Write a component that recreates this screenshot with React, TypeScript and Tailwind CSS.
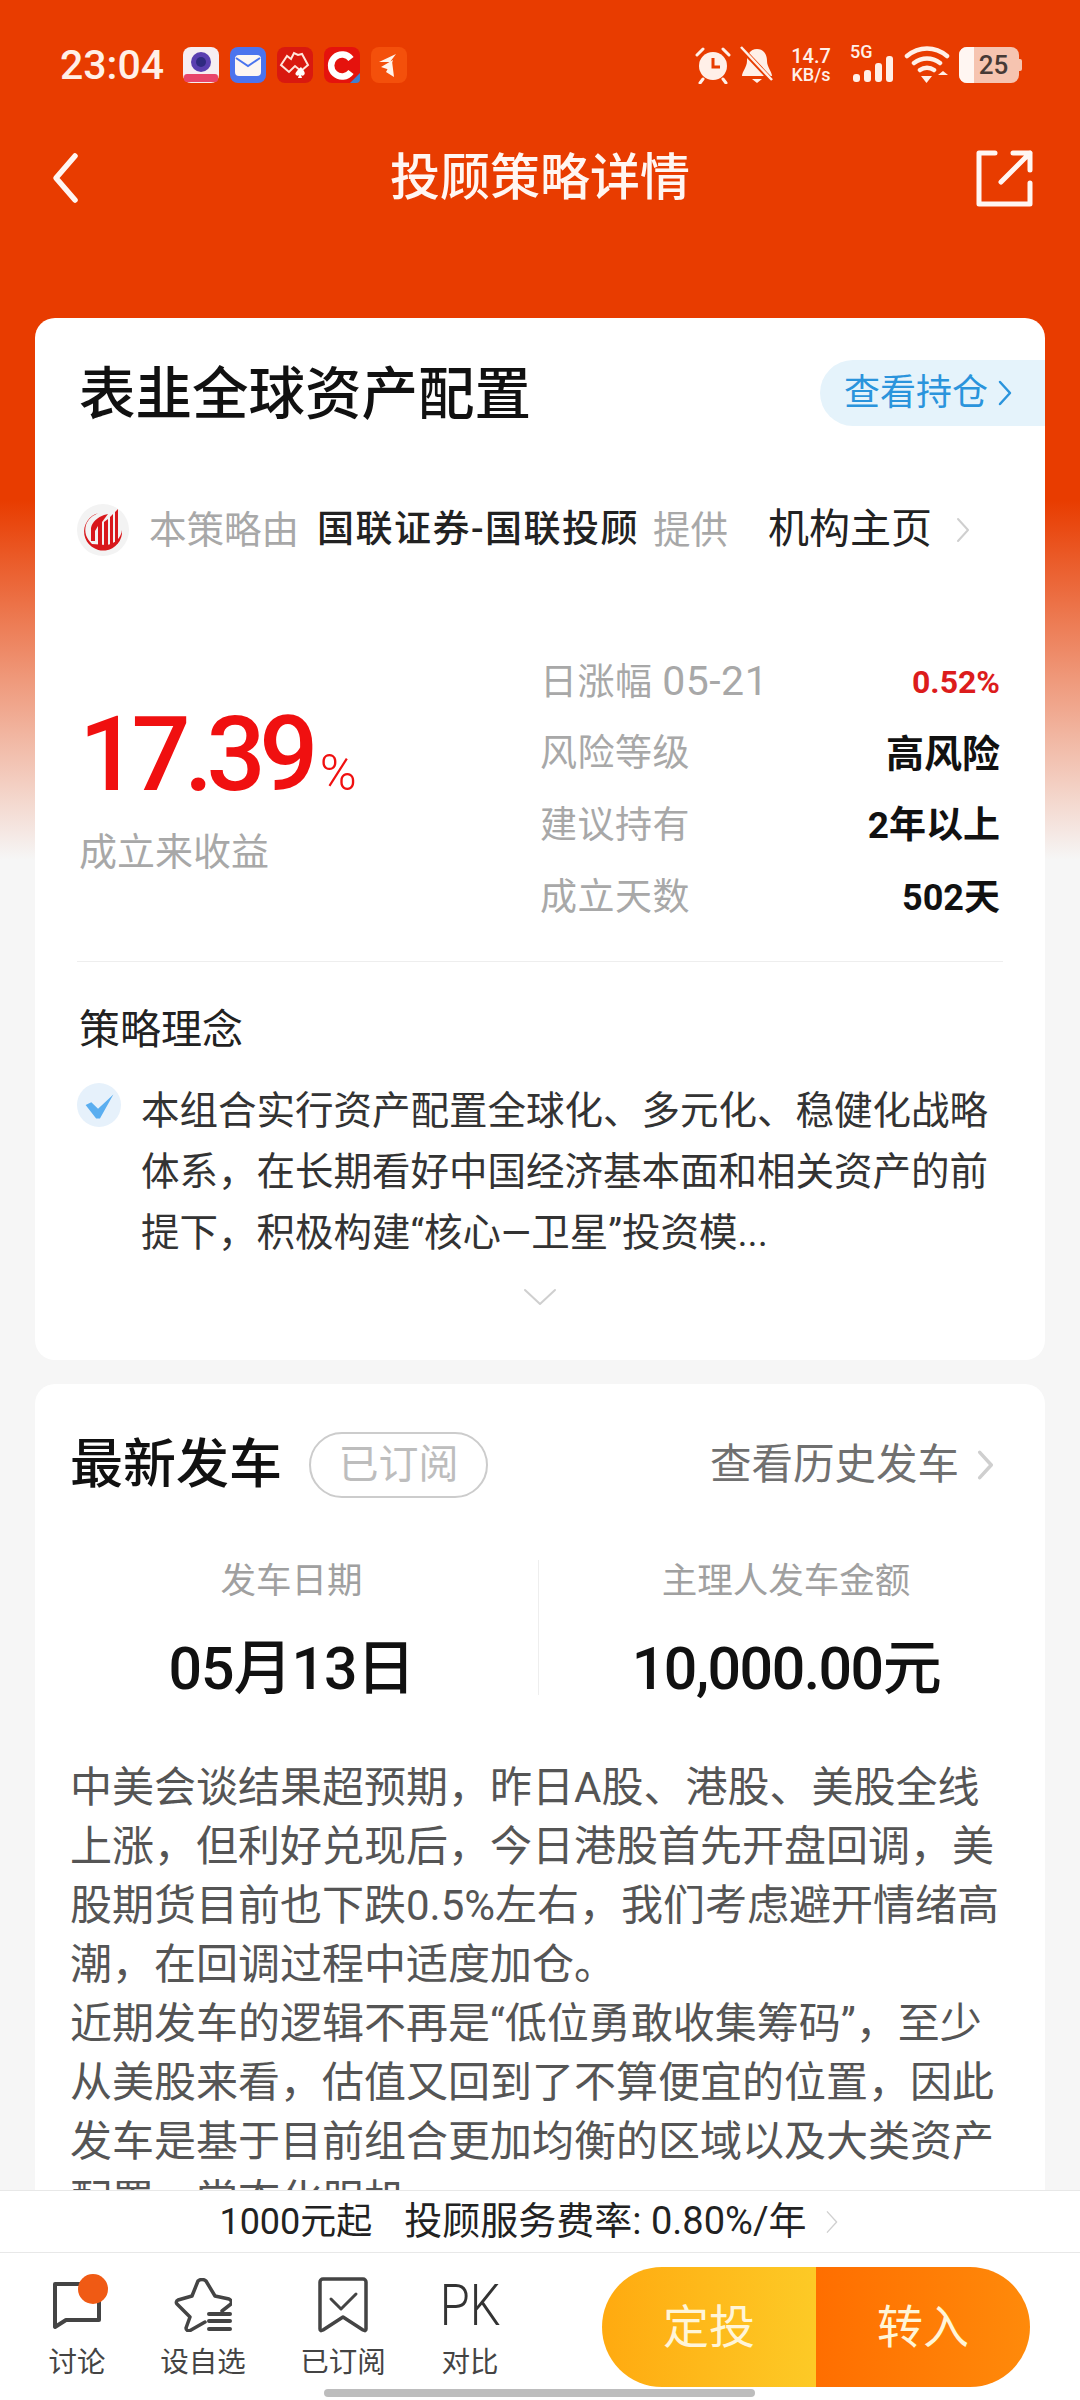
import React from "react";

const Chevron = ({ className = "", color = "#c8c8c8", w = 2.5 }: { className?: string; color?: string; w?: number }) => (
  <svg viewBox="0 0 14 26" className={className} fill="none" stroke={color} strokeWidth={w} strokeLinecap="round" strokeLinejoin="round">
    <path d="M2 2l10 11L2 24" />
  </svg>
);

const Row = ({ label, value, valueClass }: { label: React.ReactNode; value: string; valueClass: string }) => (
  <div className="flex h-[72px] items-center justify-between">
    <span className="text-[37px] tracking-[0.5px] text-[#a8a8a8]">{label}</span>
    <span className={valueClass}>{value}</span>
  </div>
);

const ToolItem = ({ icon, label, className }: { icon: React.ReactNode; label: string; className: string }) => (
  <div className={`flex w-[90px] flex-col items-center ${className}`}>
    <div className="flex h-[70px] items-center justify-center">{icon}</div>
    <span className="mt-[5px] whitespace-nowrap text-[28.5px] leading-[36px] text-[#444]">{label}</span>
  </div>
);

export default function App() {
  return (
    <div
      className="relative flex h-[2400px] w-[1080px] flex-col overflow-hidden bg-[#f6f6f6] text-black"
      style={{ fontFamily: 'Roboto, "Noto Sans CJK SC", sans-serif' }}
    >
      <div className="flex min-h-0 flex-1 flex-col overflow-hidden bg-[linear-gradient(180deg,#e83c00_0px,#e83c00_500px,#f6f6f6_860px,#f6f6f6_100%)]">
        {/* status bar */}
        <div className="flex h-[84px] shrink-0 items-center justify-between pl-[60px] pr-[58px] pt-[46px] text-[#fff0e8]">
          <div className="flex items-center">
            <span className="text-[41px] font-medium leading-[42px]">23:04</span>
            <div className="ml-[19px] flex items-center gap-[11px]">
              <svg viewBox="0 0 36 36" className="h-[36px] w-[36px]">
                <rect width="36" height="36" rx="8" fill="#f6eef2" />
                <circle cx="18" cy="15" r="10" fill="#5a3fb0" />
                <circle cx="18" cy="15" r="5" fill="#2f2a80" />
                <rect x="1" y="27" width="34" height="8" rx="3" fill="#e8456a" />
              </svg>
              <svg viewBox="0 0 36 36" className="h-[36px] w-[36px]">
                <rect width="36" height="36" rx="8" fill="#4b74ee" />
                <rect x="5" y="8" width="26" height="21" rx="4" fill="#fdf6f2" />
                <path d="M6 11l12 8 12-8" fill="none" stroke="#4b74ee" strokeWidth="2" />
              </svg>
              <svg viewBox="0 0 36 36" className="h-[36px] w-[36px]">
                <rect width="36" height="36" rx="8" fill="#d9190f" />
                <path d="M4 18l6-9 4 3 3-6 4 2 4-1 6 11-7 6-6-5-6 6z" fill="none" stroke="#ffe6dc" strokeWidth="2" />
                <path d="M24 20c3 4 5 6 3 8-1 1-2 1-3 0l1 3h-4l1-3c-1 1-2 1-3 0-2-2 2-5 5-8z" fill="#fff" />
              </svg>
              <svg viewBox="0 0 36 36" className="h-[36px] w-[36px]">
                <rect width="36" height="36" rx="8" fill="#e5120d" />
                <path d="M27 12a11 11 0 1 0 0 13" fill="none" stroke="#fff" strokeWidth="6.5" />
                <path d="M36 26v6a4 4 0 0 1-4 4h-6z" fill="#3f7fd0" />
              </svg>
              <svg viewBox="0 0 36 36" className="h-[36px] w-[36px]">
                <rect width="36" height="36" rx="8" fill="#f4500b" />
                <path d="M8 15l17-8-6 8zM10 20l12-7-3 10zM15 25l6-11 2 16z" fill="#fff4ec" />
              </svg>
            </div>
          </div>
          <div className="flex items-center">
            <svg viewBox="0 0 38 38" className="h-[38px] w-[38px]">
              <circle cx="19" cy="20" r="14" fill="#fff0e8" />
              <path d="M19 12v9h7" fill="none" stroke="#e83c00" strokeWidth="3" />
              <path d="M3 9l6-6M35 9l-6-6M9 33l-3 4M29 33l3 4" stroke="#fff0e8" strokeWidth="3" strokeLinecap="round" />
            </svg>
            <svg viewBox="0 0 34 38" className="ml-[8px] h-[38px] w-[34px]">
              <path d="M17 3c7 0 10 6 10 12 0 6 5 11 5 15H2c0-4 5-9 5-15 0-6 3-12 10-12z" fill="#fff0e8" />
              <path d="M12 33h10l-5 4z" fill="#fff0e8" />
              <path d="M2 3l30 32" stroke="#e83c00" strokeWidth="5" />
              <path d="M1 1l31 33" stroke="#fff0e8" strokeWidth="2.5" />
            </svg>
            <div className="ml-[14px] flex w-[46px] flex-col items-center font-medium">
              <span className="text-[20px] leading-[19px]">14.7</span>
              <span className="text-[18px] leading-[18px]">KB/s</span>
            </div>
            <div className="relative ml-[16px] h-[38px] w-[44px]">
              <span className="absolute left-0 top-[-3px] text-[18px] font-medium leading-[18px]">5G</span>
              <svg viewBox="0 0 44 38" className="h-[38px] w-[44px]">
                <rect x="3" y="28" width="7" height="8" rx="3" fill="#fff0e8" />
                <rect x="14" y="24" width="7" height="12" rx="3" fill="#fff0e8" />
                <rect x="25" y="17" width="7" height="19" rx="3" fill="#fff0e8" />
                <rect x="36" y="10" width="7" height="26" rx="3" fill="#fff0e8" />
              </svg>
            </div>
            <svg viewBox="0 0 46 38" className="ml-[10px] h-[38px] w-[46px]">
              <path d="M3 10c12-10 28-10 40 0M10 17c8-6 18-6 26 0M16 24c4-3 10-3 14 0" fill="none" stroke="#fff0e8" strokeWidth="4.5" strokeLinecap="round" />
              <path d="M17 30h11l-5.500 7z" fill="#fff0e8" />
              <path d="M34 29l5-4 5 4z" fill="#fff0e8" />
            </svg>
            <div className="ml-[9px] flex items-center">
              <div className="relative h-[36px] w-[60px] overflow-hidden rounded-[8px] bg-[#f6c4b0]">
                <div className="h-full w-[15px] bg-[#fff6f2]" />
                <span className="absolute inset-0 flex items-center justify-center pl-[9px] text-[26px] font-medium text-[#473a36]">25</span>
              </div>
              <div className="h-[12px] w-[3px] rounded-r-[2px] bg-[#f6c4b0]" />
            </div>
          </div>
        </div>

        {/* nav */}
        <div className="relative mt-[64px] flex h-[60px] shrink-0 items-center justify-center">
          <svg viewBox="0 0 28 52" className="absolute left-[51px] h-[52px] w-[28px]" fill="none" stroke="#fff6f2" strokeWidth="5.5" strokeLinecap="round" strokeLinejoin="round">
            <path d="M24 4L5 26l19 22" />
          </svg>
          <span className="text-[50px] font-medium leading-[60px] text-[#fff6f2]">投顾策略详情</span>
          <svg viewBox="0 0 57 57" className="absolute left-[976px] h-[57px] w-[57px]" fill="none" stroke="#fff6f2" strokeWidth="5" strokeLinecap="round" strokeLinejoin="round">
            <path d="M19 3H3v51h51V33" />
            <path d="M25 32L54 3M37 3h17v17" />
          </svg>
        </div>

        {/* card 1 */}
        <div className="mx-[35px] mt-[110px] h-[1042px] shrink-0 rounded-[20px] bg-white">
          <div className="flex items-start justify-between pt-[42px]">
            <span className="ml-[44px] text-[56.5px] font-medium leading-[70px] text-[#111]">表韭全球资产配置</span>
            <div className="flex h-[66px] w-[225px] items-center rounded-l-[33px] bg-[#e5f3fb] pl-[24px]">
              <span className="text-[36px] text-[#2a94dc]">查看持仓</span>
              <Chevron className="ml-[10px] h-[26px] w-[14px]" color="#2a94dc" w={2.5} />
            </div>
          </div>

          <div className="ml-[42px] mt-[70px] flex h-[60px] items-center">
            <svg viewBox="0 0 52 52" className="h-[52px] w-[52px] shrink-0">
              <circle cx="26" cy="26" r="26" fill="#f3f3f3" />
              <path d="M22 9A19 19 0 1 0 45 26c-1 8-7 14-16 15l-14-1C9 34 7 28 9 21c2-6 7-10 13-12z" fill="#d8181c" />
              <path d="M14 24c1-6 7-11 13-13l4-1-6 8v23h-4V22l-3 5v10h-4z" fill="#d8181c" />
              <path d="M27 18l4-3v26h-4zM33 13l3-3v31h-3zM38 8l3-3v34l-3 2z" fill="#d8181c" />
            </svg>
            <span className="ml-[20px] text-[37.5px] text-[#a8a8a8]">本策略由</span>
            <span className="ml-[18px] text-[37px] font-medium tracking-[1.5px] text-[#222]">国联证券-国联投顾</span>
            <span className="ml-[14px] text-[37.5px] text-[#a8a8a8]">提供</span>
            <span className="ml-[40px] text-[41px] text-[#222]">机构主页</span>
            <Chevron className="ml-[24px] h-[26px] w-[14px]" color="#cfcfcf" w={2} />
          </div>

          <div className="mt-[86px] flex items-start">
            <div className="ml-[44px] w-[461px] pt-[54px]">
              <div className="flex items-baseline">
                <span className="text-[104px] font-medium leading-[110px] tracking-[-6.5px] text-[#f01010]">17.39</span>
                <span className="ml-[8px] text-[50px] font-light leading-none text-[#f01010]">%</span>
              </div>
              <div className="mt-[17px] text-[38px] leading-[50px] text-[#a8a8a8]">成立来收益</div>
            </div>
            <div className="w-[460px]">
              <Row
                label={
                  <>
                    日涨幅 <span className="text-[41px]">05-21</span>
                  </>
                }
                value="0.52%"
                valueClass="text-[32px] font-bold text-[#dc1c1c]"
              />
              <Row label="风险等级" value="高风险" valueClass="text-[38px] font-bold text-[#111]" />
              <Row label="建议持有" value="2年以上" valueClass="text-[37px] font-bold text-[#111]" />
              <Row label="成立天数" value="502天" valueClass="text-[36px] font-bold text-[#111]" />
            </div>
          </div>

          <div className="mx-[42px] mt-[27px] h-[1px] bg-[#eeeeee]" />

          <div className="ml-[44px] mt-[42px] text-[41px] leading-[52px] text-[#222]">策略理念</div>
          <div className="ml-[42px] mt-[24px] flex">
            <svg viewBox="0 0 46 46" className="mt-[3px] h-[44px] w-[44px] shrink-0">
              <circle cx="23" cy="23" r="23" fill="#e6f1fb" />
              <path d="M9 23l6-3 7 7L38 12l-14 25h-4z" fill="#5aaef0" />
            </svg>
            <p className="ml-[20px] w-[860px] text-[38.5px] leading-[61px] text-[#333]">
              本组合实行资产配置全球化、多元化、稳健化战略体系，在长期看好中国经济基本面和相关资产的前提下，积极构建“核心—卫星”投资模...
            </p>
          </div>
          <div className="mt-[25px] flex justify-center">
            <svg viewBox="0 0 34 18" className="h-[18px] w-[34px]" fill="none" stroke="#cfcfcf" strokeWidth="2" strokeLinecap="round" strokeLinejoin="round">
              <path d="M2 2l15 14L32 2" />
            </svg>
          </div>
        </div>

        {/* card 2 */}
        <div className="mx-[35px] mt-[24px] flex-1 rounded-t-[20px] bg-white pt-[46px]">
          <div className="flex h-[70px] items-center pl-[35px]">
            <span className="text-[53px] font-medium leading-[70px] text-[#111]">最新发车</span>
            <span className="ml-[27px] flex h-[66px] w-[179px] items-center justify-center rounded-[33px] border-2 border-[#cccccc] text-[40px] text-[#bdbdbd]">已订阅</span>
            <span className="ml-[222px] text-[41.5px] text-[#707070]">查看历史发车</span>
            <Chevron className="ml-[18px] h-[30px] w-[17px]" color="#cfcfcf" w={3} />
          </div>
          <div className="mt-[58px] flex">
            <div className="flex w-[503px] flex-col items-center pl-[10px]">
              <span className="text-[35.5px] leading-[46px] text-[#a0a0a0]">发车日期</span>
              <span className="mt-[29px] text-[59px] font-medium leading-[72px] tracking-[-1px] text-[#111]">05月13日</span>
            </div>
            <div className="mt-[2px] h-[135px] w-[1px] bg-[#eeeeee]" />
            <div className="flex w-[506px] flex-col items-center pr-[12px]">
              <span className="text-[35.5px] leading-[46px] text-[#a0a0a0]">主理人发车金额</span>
              <span className="mt-[29px] text-[59px] font-medium leading-[72px] tracking-[-1.5px] text-[#111]">10,000.00元</span>
            </div>
          </div>
          <p className="ml-[35px] mr-[37px] mt-[53px] text-[42px] leading-[59px] text-[#555]">
            中美会谈结果超预期，昨日A股、港股、美股全线上涨，但利好兑现后，今日港股首先开盘回调，美股期货目前也下跌0.5%左右，我们考虑避开情绪高潮，在回调过程中适度加仓。
            <br />
            近期发车的逻辑不再是“低位勇敢收集筹码”，至少从美股来看，估值又回到了不算便宜的位置，因此发车是基于目前组合更加均衡的区域以及大类资产配置、常态化服机
          </p>
        </div>
      </div>

      {/* fee bar */}
      <div className="flex h-[63px] shrink-0 items-center justify-center border-y border-[#e8e8e8] bg-white pr-[22px]">
        <span className="text-[36px] text-[#222]">1000元起</span>
        <span className="ml-[32px] text-[38px] text-[#222]">投顾服务费率: 0.80%/年</span>
        <Chevron className="ml-[18px] h-[24px] w-[14px]" color="#d0d0d0" w={1.5} />
      </div>

      {/* toolbar */}
      <div className="relative flex h-[147px] shrink-0 items-start bg-white">
        <div className="ml-[32px] mt-[17px] flex">
          <ToolItem
            className=""
            label="讨论"
            icon={
              <div className="relative">
                <svg viewBox="0 0 50 50" className="h-[50px] w-[50px]" fill="none" stroke="#444" strokeWidth="4" strokeLinejoin="round">
                  <path d="M3 4h44v36H14L3 47z" />
                </svg>
                <span className="absolute left-[26px] top-[-6px] h-[30px] w-[30px] rounded-full bg-[#f05a14]" />
              </div>
            }
          />
          <ToolItem
            className="ml-[36px]"
            label="设自选"
            icon={
              <svg viewBox="0 0 58 54" className="h-[54px] w-[58px]" fill="none" stroke="#444" strokeWidth="3.5" strokeLinejoin="round" strokeLinecap="round">
                <path d="M48 33l9-7c1-2 0-4-2-5l-14-3-9-15c-2-2-6-2-8 0l-6 15-14 4c-2 1-2 3-1 4l13 13-4 11c0 2 2 4 5 2l14-8" />
                <path d="M35 36h21M35 43h21M35 51h21" strokeWidth="4" strokeLinecap="round" />
              </svg>
            }
          />
          <ToolItem
            className="ml-[50px]"
            label="已订阅"
            icon={
              <svg viewBox="0 0 50 56" className="h-[56px] w-[50px]" fill="none" stroke="#444" strokeWidth="3.5" strokeLinejoin="round" strokeLinecap="round">
                <path d="M5 2h40a3 3 0 0 1 3 3v47c0 2-1 2-3 1L25 40 5 53c-2 1-3 1-3-1V5a3 3 0 0 1 3-3z" />
                <path d="M13 22l10 10 15-15" strokeWidth="3" />
              </svg>
            }
          />
          <ToolItem className="ml-[37px]" label="对比" icon={<span className="scale-x-[0.84] text-[58px] font-light leading-[60px] text-[#333]">PK</span>} />
        </div>
        <div className="absolute left-[602px] top-[14px] flex h-[120px] w-[428px] overflow-hidden rounded-[60px] text-[46px] text-[#fff5d8]">
          <div className="flex w-[214px] items-center justify-center bg-[linear-gradient(90deg,#ffaa10,#fdca26)]">定投</div>
          <div className="flex w-[214px] items-center justify-center bg-[linear-gradient(90deg,#ff6e00,#ff8a0a)]">转入</div>
        </div>
        <div className="absolute bottom-[3px] left-[324px] h-[8px] w-[431px] rounded-full bg-[#bdbdbd]" />
      </div>
    </div>
  );
}
